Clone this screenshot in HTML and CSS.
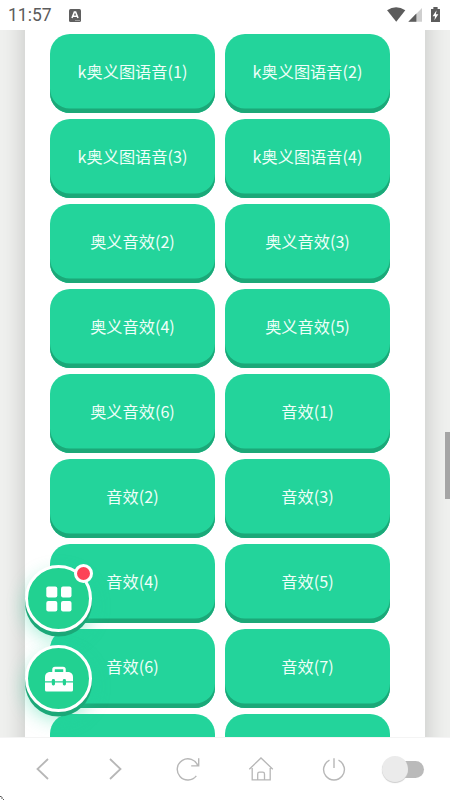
FILE: index.html
```html
<!DOCTYPE html>
<html lang="zh-CN">
<head>
<meta charset="utf-8">
<title>音效</title>
<link rel="stylesheet" href="styles.css">
</head>
<body>
<div class="screen">
  <header class="status">
    <span class="clock">11:57</span>
    <svg class="badge-a" width="12" height="13" viewBox="0 0 12 13"><rect width="12" height="13" rx="1.5" fill="#5f5f5f"/><path d="M3 9 5.400 3h1.200l2.400 6M4 7.300h4" fill="none" stroke="#fff" stroke-width="1.600"/><path d="M6 11.500h5" stroke="#aaa" stroke-width=".8"/></svg>
    <svg class="signals" width="58" height="18" viewBox="0 0 58 18">
      <path d="M.5 3.400Q10 -3 19.800 3.400L10.200 15.500Z" fill="#5c5c5c"/>
      <path d="M37.500 1v14.500H23Z" fill="#cfcfcf"/><path d="M31.500 7v8.500H23Z" fill="#5c5c5c"/>
      <path d="M47 2h2.500V0h4.500v2h2.500v14H47Z" fill="#5c5c5c"/>
      <path d="M52.900 3.500 48.700 9.700h2.600l-.7 4.300 4.200-6.400h-2.600Z" fill="#fff"/>
    </svg>
  </header>
  <main class="view">
    <div class="panel">
      <div class="button">k奥义图语音(1)</div><div class="button">k奥义图语音(2)</div>
      <div class="button">k奥义图语音(3)</div><div class="button">k奥义图语音(4)</div>
      <div class="button">奥义音效(2)</div><div class="button">奥义音效(3)</div>
      <div class="button">奥义音效(4)</div><div class="button">奥义音效(5)</div>
      <div class="button">奥义音效(6)</div><div class="button">音效(1)</div>
      <div class="button">音效(2)</div><div class="button">音效(3)</div>
      <div class="button">音效(4)</div><div class="button">音效(5)</div>
      <div class="button">音效(6)</div><div class="button">音效(7)</div>
      <div class="button"></div><div class="button"></div>
    </div>
    <div class="floating">
      <div class="fab">
        <svg width="26" height="26" viewBox="0 0 26 26" fill="#fff"><rect x=".3" y=".5" width="11" height="11" rx="2"/><rect x="15" y=".5" width="10.500" height="11" rx="2"/><rect x=".3" y="15" width="11" height="10.500" rx="2"/><rect x="15" y="15" width="10.500" height="10.500" rx="2"/></svg>
        <span class="dot"></span>
      </div>
      <div class="fab">
        <svg width="28" height="26" viewBox="0 0 28 26"><path d="M8.500 6V3.500Q8.500 2 10 2h8q1.500 0 1.500 1.500V6" fill="none" stroke="#fff" stroke-width="2.500"/><path d="M4 6h20Q28 7 28 11v4.200H0V11Q0 7 4 6ZM0 16.500h28V24q0 1.500-1.500 1.500h-25Q0 25.500 0 24Z" fill="#fff"/><rect x="6.800" y="13" width="3.200" height="6.500" rx="1.400" fill="#22d191"/><rect x="17.800" y="13" width="3.200" height="6.500" rx="1.400" fill="#22d191"/></svg>
      </div>
    </div>
    <div class="scrollbar"></div>
  </main>
  <nav class="toolbar">
    <svg width="28" height="28" viewBox="0 0 28 28"><path d="M20 4 9.500 14 20 24" stroke-width="1.800"/></svg>
    <svg width="28" height="28" viewBox="0 0 28 28"><path d="M9 4l10.500 10L9 24" stroke-width="1.800"/></svg>
    <svg width="28" height="28" viewBox="0 0 28 28"><path d="M22.300 20.800A10.600 10.600 0 1 1 23.800 10.700M24.700 3.200v7.700h-7.500" stroke-width="1.400"/></svg>
    <svg width="28" height="28" viewBox="0 0 28 28"><path d="M2.300 14.200 14 3l11.800 11.200M5.200 13v11.800h18V13M10.700 24.800v-5.800q0-1.800 1.800-1.800h3.200q1.800 0 1.800 1.800v5.800" stroke-width="1.300"/></svg>
    <svg width="28" height="28" viewBox="0 0 28 28"><path d="M9.500 5.200a10.400 10.400 0 1 0 9 0M14 3.300v9.700" stroke-width="1.400"/></svg>
    <div class="switch"><div class="knob"></div></div>
  </nav>
  <svg class="corner" width="5" height="5" viewBox="0 0 5 5"><path d="M0 1.500h1.500M1 3h2M3 4.500h1" stroke="#555" stroke-width="1"/></svg>
</div>
</body>
</html>
```
FILE: styles.css
```css
* { box-sizing: border-box; }
body { margin: 0; background: #fff; font-family: "Noto Sans CJK SC", sans-serif; }
.screen { width: 450px; height: 800px; display: flex; flex-direction: column; position: relative; overflow: hidden; }
.status { height: 30px; flex: none; display: flex; align-items: center; padding: 0 7px 0 8px; background: #fff; }
.clock { width: 61px; font: 17.5px/30px Roboto, sans-serif; color: #5c5c5c; }
.signals { margin-left: auto; padding-top: 1px; }
.view { height: 707px; flex: none; position: relative; overflow: hidden; background: #f0f1ef; padding: 0 25px; }
.panel { width: 400px; height: 765px; margin-top: -30px; padding: 34px 35px 0 25px; background: #fff; box-shadow: 0 0 24px rgba(0, 0, 0, .2); display: grid; grid-template-columns: 165px 165px; grid-auto-rows: 79px; gap: 6px 10px; }
.button { height: 79.4px; border-radius: 20px; background: #23d49b; box-shadow: inset 0 -4.5px 0 #1ba878; color: #effff9; font-size: 16.2px; line-height: 24px; display: flex; align-items: center; justify-content: center; padding-bottom: 5px; }
.floating { position: absolute; left: 25px; top: 535px; display: flex; flex-direction: column; gap: 13px; }
.fab { width: 67px; height: 67px; border: 3px solid #fff; border-radius: 50%; background: #22d191; box-shadow: 0 4.5px 0 #1ba878, 0 8px 18px rgba(35, 212, 155, .4); display: flex; align-items: center; justify-content: center; position: relative; }
.dot { position: absolute; right: -4px; top: -4px; width: 19px; height: 19px; border-radius: 50%; border: 3px solid #fff; background: #fd4357; }
.scrollbar { position: absolute; right: 0; top: 402px; width: 5px; height: 67px; background: #a5a5a5; }
.toolbar { height: 63px; flex: none; border-top: 1px solid #f4f4f4; background: #fff; display: flex; align-items: center; gap: 45px; padding-left: 28px; }
.toolbar svg { flex: none; fill: none; stroke: #b7b7b7; }
.switch { width: 42px; height: 17px; margin-left: -11px; border-radius: 9px; background: #bababa; display: flex; align-items: center; flex: none; }
.knob { width: 26px; height: 26px; flex: none; border-radius: 50%; background: #ebebeb; box-shadow: 0 1px 1px #ccc; }
.corner { position: absolute; left: 0; bottom: 0; }
```
